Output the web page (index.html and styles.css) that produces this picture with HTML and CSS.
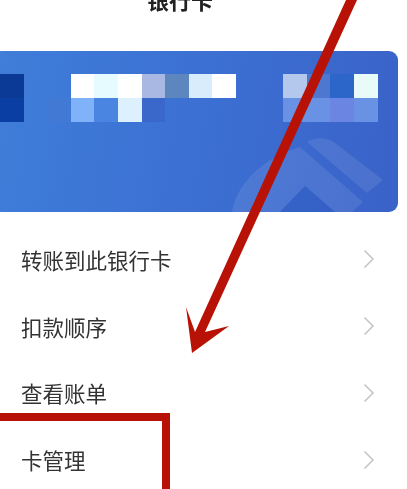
FILE: index.html
```html
<!DOCTYPE html>
<html lang="zh">
<head>
<meta charset="utf-8">
<title>银行卡</title>
<link rel="stylesheet" href="styles.css">
</head>
<body>
<main class="screen">
  <div class="content">
    <h1 class="title">银行卡</h1>
    <section class="card">
      <div class="mosaic">
        <i class="navy"></i><i></i><i></i><i class="white"></i><i class="ice"></i><i class="white"></i><i class="lav"></i><i class="slate"></i><i class="pale"></i><i class="white"></i><i></i><i></i><i class="peri"></i><i class="mid"></i><i class="deep"></i><i class="mint"></i>
        <i class="navy2"></i><i></i><i class="faint"></i><i class="sky"></i><i class="azure"></i><i class="pale2"></i><i class="royal"></i><i></i><i></i><i></i><i></i><i></i><i class="band"></i><i class="band"></i><i class="band2"></i><i class="band"></i>
      </div>
      <svg class="emblem" viewBox="0 0 170 80" aria-hidden="true">
        <path class="emblem-a" d="M17 80C22 50 50 25 85 15L148 70L137 80H120L90 54L65 80Z"/>
        <path class="emblem-a" d="M92 10C100 5 112 5 120 11L168 48L152 61Z"/>
        <path class="emblem-b" d="M90 54L120 80H65Z"/>
      </svg>
    </section>
    <ul class="menu">
      <li class="row"><span>转账到此银行卡</span><svg class="chev" viewBox="0 0 12 20"><path d="M1.5 1.5L10 10L1.5 18.5"/></svg></li>
      <li class="row"><span>扣款顺序</span><svg class="chev" viewBox="0 0 12 20"><path d="M1.5 1.5L10 10L1.5 18.5"/></svg></li>
      <li class="row"><span>查看账单</span><svg class="chev" viewBox="0 0 12 20"><path d="M1.5 1.5L10 10L1.5 18.5"/></svg></li>
      <li class="row"><span>卡管理</span><svg class="chev" viewBox="0 0 12 20"><path d="M1.5 1.5L10 10L1.5 18.5"/></svg></li>
    </ul>
  </div>
  <svg class="arrow" viewBox="0 0 407 489" aria-hidden="true">
    <path d="M346 0H357L205 332L229 326L192 353L186 307L195 332Z"/>
  </svg>
  <div class="callout"></div>
</main>
</body>
</html>
```
FILE: styles.css
```css
* { box-sizing: border-box; }
html, body { margin: 0; padding: 0; background: #fff; }
.screen {
  position: relative;
  width: 407px;
  height: 489px;
  overflow: hidden;
  font-family: "Noto Sans CJK SC", "Noto Sans", sans-serif;
}
.content { filter: blur(0.6px); }
.title {
  margin: -17px 0 0;
  padding-right: 47px;
  height: 68px;
  text-align: center;
  font-size: 22px;
  font-weight: 700;
  line-height: 32px;
  color: #222;
}
.card {
  position: relative;
  height: 161px;
  margin: 0 9px 0 -8px;
  padding: 23px 0 0 8px;
  border-radius: 9px;
  overflow: hidden;
  background: linear-gradient(100deg, #3f7ed9 0%, #3c70d3 50%, #3a62c8 100%);
}
.mosaic {
  display: grid;
  grid-template-columns: repeat(16, 23.6px);
  grid-auto-rows: 24px;
}
.navy { background: #0a3a96; }
.navy2 { background: #0b3ea3; }
.white { background: #fff; }
.ice { background: #e6fbff; }
.lav { background: #a8b8e2; }
.slate { background: #5c86bd; }
.pale { background: #d8ecfb; }
.peri { background: #b4c8ee; }
.mid { background: #4e78cf; }
.deep { background: #2c66c9; }
.mint { background: #e8fbf9; }
.faint { background: #4279d4; }
.sky { background: #7fb2f8; }
.azure { background: #4b85e2; }
.pale2 { background: #dcf0fd; }
.royal { background: #3a68ca; }
.band { background: #6a92e4; }
.band2 { background: #6a86e2; }
.emblem {
  position: absolute;
  right: 13px;
  bottom: 0;
  width: 170px;
  height: 80px;
}
.emblem-a { fill: #fff; opacity: 0.09; }
.emblem-b { fill: #2f5cc0; opacity: 0.45; }
.menu {
  list-style: none;
  margin: 14px 0 0;
  padding: 0 32px 0 21px;
}
.row {
  display: flex;
  align-items: center;
  justify-content: space-between;
  height: 66.8px;
  font-size: 21.5px;
  color: #333;
}
.chev {
  width: 12px;
  height: 20px;
  fill: none;
  stroke: #c4c4c4;
  stroke-width: 1.5;
}
.arrow {
  position: absolute;
  inset: 0;
  width: 407px;
  height: 489px;
  fill: #b81206;
}
.callout {
  position: absolute;
  left: -10px;
  top: 413px;
  width: 180px;
  height: 90px;
  border: 8.5px solid #b81206;
}
```
